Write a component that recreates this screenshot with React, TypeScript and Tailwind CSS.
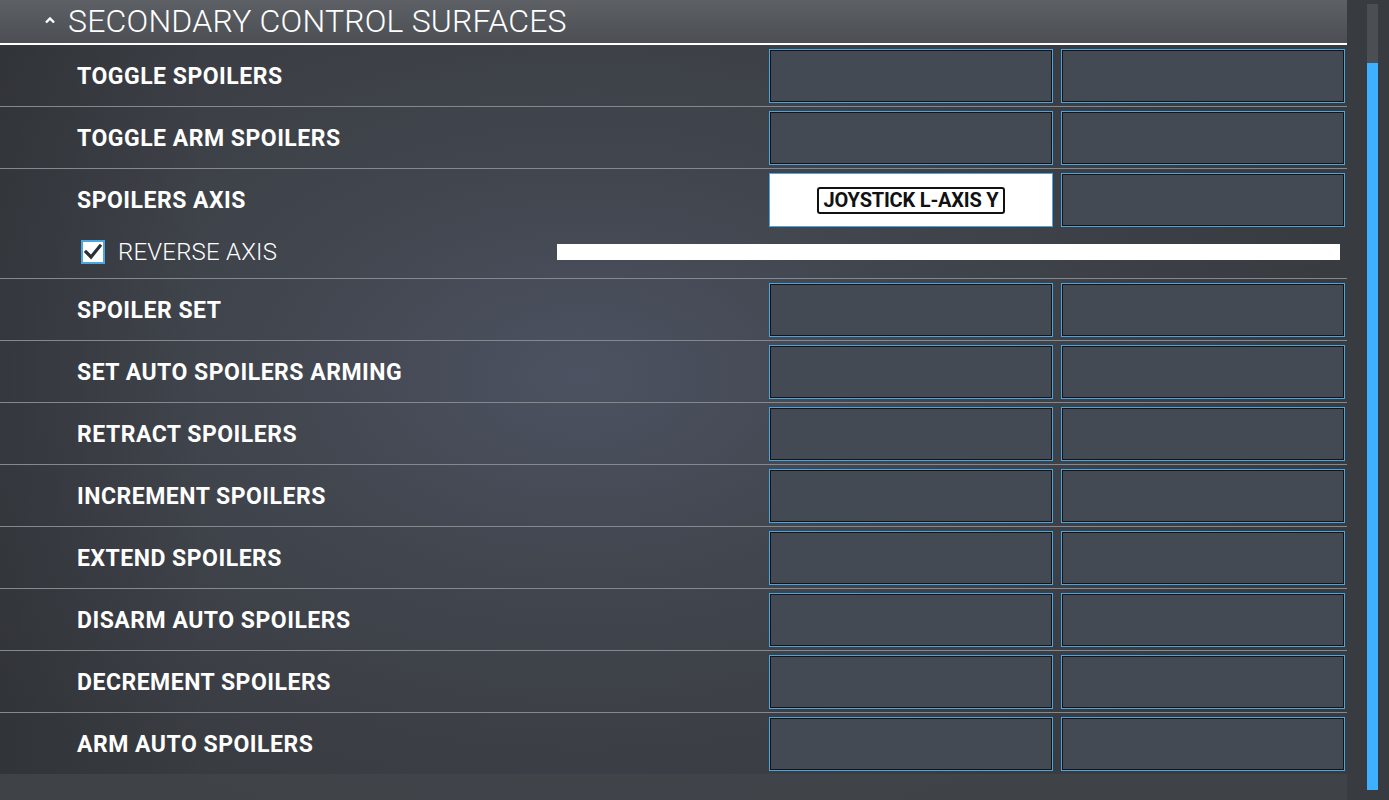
import React from 'react';

const FONT = { fontFamily: 'Roboto, "Noto Sans", sans-serif' };

interface Binding {
  label: string;
  primary?: string;
  reverse?: boolean;
}

const BINDINGS: Binding[] = [
  { label: 'TOGGLE SPOILERS' },
  { label: 'TOGGLE ARM SPOILERS' },
  { label: 'SPOILERS AXIS', primary: 'JOYSTICK L-AXIS Y', reverse: true },
  { label: 'SPOILER SET' },
  { label: 'SET AUTO SPOILERS ARMING' },
  { label: 'RETRACT SPOILERS' },
  { label: 'INCREMENT SPOILERS' },
  { label: 'EXTEND SPOILERS' },
  { label: 'DISARM AUTO SPOILERS' },
  { label: 'DECREMENT SPOILERS' },
  { label: 'ARM AUTO SPOILERS' },
];

function InputSlot({ value }: { value?: string }) {
  if (value) {
    return (
      <div className="w-[284px] h-[54px] border border-[#4ba6df] bg-white flex items-center justify-center">
        <span className="px-[4px] h-[27px] flex items-center border-2 border-[#111] rounded-[3px] text-[20px] font-bold text-[#111] leading-none tracking-[-0.2px]">
          {value}
        </span>
      </div>
    );
  }

  return (
    <div className="w-[284px] h-[54px] border border-[#4ba6df] bg-[#434a53] shadow-[inset_0_0_0_1px_#111418]" />
  );
}

function BindingRow({ binding, last }: { binding: Binding; last: boolean }) {
  return (
    <div className={`flex flex-col ${last ? '' : 'border-b border-[#85888c]'}`}>
      <div className="flex h-[61px] items-start">
        <div className="flex-1 h-full flex items-center pl-[77px] pt-[4px] text-[23px] font-bold text-white tracking-[0.5px]">
          {binding.label}
        </div>
        <div className="flex gap-[8px] pt-[4px] pl-[1px] pr-[2px]">
          <InputSlot value={binding.primary} />
          <InputSlot />
        </div>
      </div>
      {binding.reverse && (
        <div className="flex items-center h-[48px] pb-[4px]">
          <div className="flex items-center pl-[81px] w-[557px]">
            <div className="w-[24px] h-[24px] bg-white border-2 border-[#4ba6df] flex items-center justify-center">
              <svg width="18" height="16" viewBox="0 0 18 16">
                <polyline points="2,8 7,13 16,2" fill="none" stroke="#2b3038" strokeWidth="3.2" strokeLinecap="square" />
              </svg>
            </div>
            <span className="ml-[13px] text-[24px] font-light text-white leading-none tracking-[0.2px]">REVERSE AXIS</span>
          </div>
          <div className="w-[783px] h-[16px] bg-white" />
        </div>
      )}
    </div>
  );
}

export default function App() {
  return (
    <div
      className="w-[1389px] h-[800px] overflow-hidden flex bg-[radial-gradient(ellipse_55%_60%_at_42%_47%,#4d5262_0%,#41454d_45%,#383b40_100%)]"
      style={FONT}
    >
      <div className="w-[1347px] flex flex-col">
        <div className="h-[45px] flex items-center border-b-2 border-white bg-[linear-gradient(180deg,#5d6166_0%,#4b4e53_100%)]">
          <svg className="ml-[44px] mt-[-4px]" width="12" height="8" viewBox="0 0 12 8">
            <polyline points="2,6.5 6,2.5 10,6.5" fill="none" stroke="#fff" strokeWidth="2.4" />
          </svg>
          <span className="ml-[12px] mt-[-2px] text-[32px] font-light text-white leading-none tracking-[0.2px]">
            SECONDARY CONTROL SURFACES
          </span>
        </div>
        <div className="flex flex-col bg-[linear-gradient(90deg,rgba(30,32,36,0.25)_0%,rgba(0,0,0,0)_15%)]">
          {BINDINGS.map((binding, index) => (
            <BindingRow key={binding.label} binding={binding} last={index === BINDINGS.length - 1} />
          ))}
        </div>
        <div className="flex-1 bg-[#4a4d52]/40" />
      </div>
      <div className="flex-1 flex justify-start pl-[20px] pt-[4px] pb-[10px]">
        <div className="w-[11px] h-full bg-[#4b4e53] flex flex-col">
          <div className="h-[59px]" />
          <div className="flex-1 bg-[#3db1ff]" />
        </div>
      </div>
    </div>
  );
}
